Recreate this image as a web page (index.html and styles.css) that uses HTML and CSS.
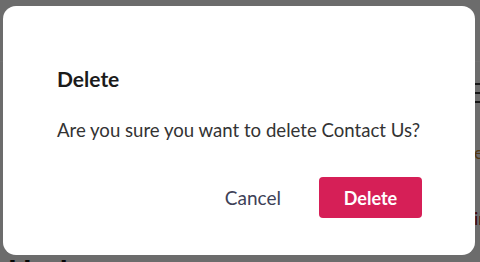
FILE: index.html
```html
<!DOCTYPE html>
<html lang="en">
<head>
<meta charset="utf-8">
<title>Delete</title>
<link rel="stylesheet" href="styles.css">
</head>
<body>
<div class="page">
  <header class="topbar"></header>
  <div class="content">
    <main class="main">
      <h1 class="page-title">Update us</h1>
    </main>
    <aside class="side">
      <div class="menu-icon"><span></span><span></span><span></span></div>
      <p class="side-link">edit</p>
      <p class="side-danger">info</p>
    </aside>
  </div>
</div>
<div class="overlay">
  <div class="dialog" role="dialog">
    <h2 class="dialog-title">Delete</h2>
    <p class="dialog-text">Are you sure you want to delete Contact Us?</p>
    <div class="dialog-actions">
      <button class="btn-cancel">Cancel</button>
      <button class="btn-delete">Delete</button>
    </div>
  </div>
</div>
</body>
</html>
```
FILE: styles.css
```css
html, body {
  margin: 0;
  padding: 0;
}
body {
  font-family: Lato, "Open Sans", sans-serif;
  width: 480px;
  height: 262px;
  overflow: hidden;
}
.page {
  height: 262px;
  overflow: hidden;
  background: #f5f5f5;
}
.topbar {
  height: 61px;
  border-bottom: 1px solid #ffffff;
}
.content {
  display: flex;
}
.main {
  width: 466px;
  padding-left: 8px;
  flex: none;
}
.page-title {
  margin: 190px 0 0;
  font: 700 32px/40px Lato, sans-serif;
  color: #111;
  white-space: nowrap;
}
.side {
  flex: none;
  width: 60px;
  padding-top: 21px;
}
.menu-icon {
  display: flex;
  flex-direction: column;
  gap: 7px;
  width: 18px;
}
.menu-icon span {
  display: block;
  height: 2px;
  background: #333;
}
.side-link {
  margin: 38px 0 0;
  font: 400 18px/22px Lato, sans-serif;
  color: #c0822a;
}
.side-danger {
  margin: 44px 0 0;
  font: 400 18px/22px Lato, sans-serif;
  color: #9c1020;
}
.overlay {
  position: fixed;
  inset: 0;
  background: rgba(0, 0, 0, 0.56);
  padding: 6px 0 0 3px;
}
.dialog {
  width: 472px;
  box-sizing: border-box;
  padding: 61px 53px 37px 54px;
  background: #ffffff;
  border-radius: 13px;
}
.dialog-title {
  margin: 0;
  font: 700 21px/24px Lato, sans-serif;
  color: #1b1b1b;
}
.dialog-text {
  margin: 28px 0 0;
  font: 400 18.6px/22px Lato, sans-serif;
  color: #333333;
  white-space: nowrap;
}
.dialog-actions {
  display: flex;
  justify-content: flex-end;
  align-items: center;
  gap: 38px;
  margin-top: 36px;
}
.btn-cancel {
  background: none;
  border: 0;
  padding: 0;
  font: 400 19px/22px Lato, sans-serif;
  color: #3d4157;
}
.btn-delete {
  width: 103px;
  height: 41px;
  background: #d61f57;
  color: #ffffff;
  border: 0;
  border-radius: 4px;
  padding: 0;
  font: 700 18px/22px Lato, sans-serif;
}
```
